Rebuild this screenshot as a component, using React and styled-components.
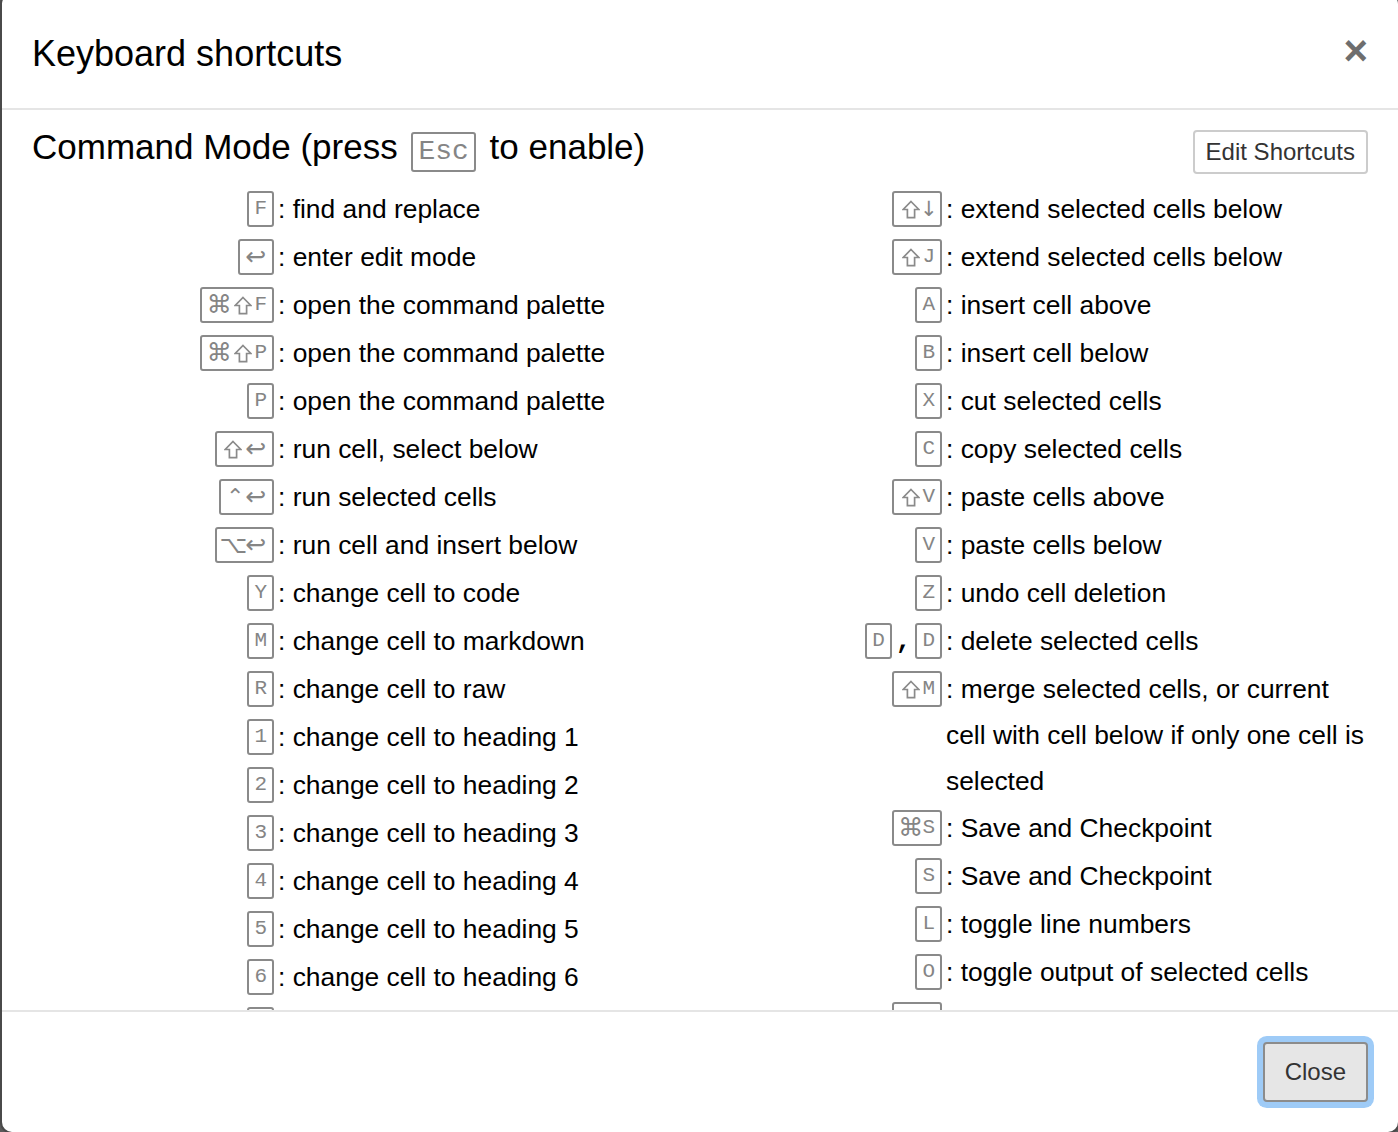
import React from 'react';
import styled, { createGlobalStyle } from 'styled-components';

const Global = createGlobalStyle`
  html, body { margin: 0; padding: 0; background: #5a5a5a; overflow: hidden; }
  body { font-family: "Liberation Sans", Arial, sans-serif; color: #000; }
  * { box-sizing: border-box; }
`;

const Page = styled.div`
  width: 1398px;
  height: 1132px;
  overflow: hidden;
`;

const Modal = styled.div`
  width: 1400px;
  margin-top: -8px;
  background: #fff;
  border: 2px solid #4a4a4a;
  border-radius: 12px;
  overflow: hidden;
`;

const Header = styled.div`
  display: flex;
  justify-content: space-between;
  align-items: flex-start;
  padding: 34px 30px 28px;
  border-bottom: 2px solid #e5e5e5;
`;

const Title = styled.h4`
  margin: 0;
  font-size: 36px;
  font-weight: normal;
  line-height: 52px;
`;

const CloseX = styled.button`
  background: none;
  border: 0;
  padding: 0;
  margin-top: 2px;
  font-family: "Liberation Sans", Arial, sans-serif;
  font-size: 42px;
  font-weight: bold;
  line-height: 42px;
  color: #6e6e6e;
  cursor: pointer;
`;

const Body = styled.div`
  height: 900px;
  padding: 15px 30px 0;
  overflow: hidden;
`;

const HeadRow = styled.div`
  display: flex;
  justify-content: space-between;
  align-items: flex-start;
  height: 60px;
`;

const Heading = styled.h4`
  margin: 0;
  font-size: 35px;
  font-weight: normal;
  line-height: 44px;
`;

const SmallButton = styled.button`
  margin-top: 5px;
  padding: 2px 11px;
  font-family: "Liberation Sans", Arial, sans-serif;
  font-size: 24px;
  line-height: 36px;
  color: #333;
  background: #fff;
  border: 2px solid #ccc;
  border-radius: 4px;
`;

const Columns = styled.div`
  display: grid;
  grid-template-columns: 668px 668px;
  align-items: start;
`;

const Column = styled.div`
  display: flex;
  flex-direction: column;
`;

const Row = styled.div`
  display: flex;
  align-items: flex-start;
`;

const KeyCell = styled.div`
  width: 246px;
  flex-shrink: 0;
  height: 48px;
  display: flex;
  align-items: center;
  justify-content: flex-end;
`;

const Descr = styled.div`
  flex: 1;
  font-size: 26.4px;
  line-height: 46px;
  padding-top: 1px;
`;

const Kbd = styled.kbd`
  display: inline-flex;
  align-items: center;
  height: ${(p) => (p.$big ? 40 : 36)}px;
  padding: 0 5px;
  margin: 0 4px;
  border: 2px solid #8a8a8a;
  border-radius: 3px;
  font-family: "Liberation Mono", "Courier New", monospace;
  font-size: ${(p) => (p.$big ? 28 : 21)}px;
  line-height: ${(p) => (p.$big ? 36 : 32)}px;
  color: #858585;
  vertical-align: ${(p) => (p.$big ? '0px' : 'middle')};
`;

const Sym = styled.span`
  display: inline-flex;
  align-items: center;
  justify-content: center;
  width: ${(p) => p.$w}px;
  height: 32px;
  font-family: "DejaVu Sans", sans-serif;
  font-size: ${(p) => p.$s}px;
  color: #858585;
`;

const Sep = styled.span`
  font-family: "Liberation Mono", monospace;
  font-size: 26px;
  font-weight: bold;
  color: #000;
`;

const Footer = styled.div`
  display: flex;
  justify-content: flex-end;
  padding: 30px;
  border-top: 2px solid #e5e5e5;
`;

const CloseButton = styled.button`
  padding: 10px 20px;
  font-family: "Liberation Sans", Arial, sans-serif;
  font-size: 24px;
  line-height: 36px;
  color: #333;
  background: #e6e6e6;
  border: 2px solid #8c8c8c;
  border-radius: 4px;
  box-shadow: 0 0 0 6px #9ecbf7;
`;

const ShiftIcon = () => (
  <svg width="18" height="19" viewBox="0 0 18 19" aria-hidden="true">
    <polygon
      points="9,1.5 16.8,9.5 12.6,9.5 12.6,17.6 5.4,17.6 5.4,9.5 1.2,9.5"
      fill="none"
      stroke="#8a8a8a"
      strokeWidth="1.7"
      strokeLinejoin="miter"
    />
  </svg>
);

const SYM = {
  '⇧': [23.5, 25],
  '⌘': [23.5, 25],
  '↩': [22, 25],
  '⌃': [19.5, 22],
  '⌥': [23.5, 24],
  '↓': [12.6, 21],
  '↑': [12.6, 21],
};

function Key({ text, big }) {
  const parts = [];
  let buf = '';
  for (const ch of text) {
    if (SYM[ch]) {
      if (buf) { parts.push(buf); buf = ''; }
      parts.push({ s: ch });
    } else buf += ch;
  }
  if (buf) parts.push(buf);
  return (
    <Kbd $big={big}>
      {parts.map((p, i) =>
        typeof p === 'string' ? (
          <span key={i}>{p}</span>
        ) : (
          <Sym key={i} $w={SYM[p.s][0]} $s={SYM[p.s][1]}>
            {p.s === '⇧' ? <ShiftIcon /> : p.s}
          </Sym>
        )
      )}
    </Kbd>
  );
}

function Shortcut({ keys, d }) {
  return (
    <Row>
      <KeyCell>
        {keys.map((k, i) =>
          k === ',' ? <Sep key={i}>,</Sep> : <Key key={i} text={k} />
        )}
      </KeyCell>
      <Descr>: {d}</Descr>
    </Row>
  );
}

const LEFT = [
  [['F'], 'find and replace'],
  [['↩'], 'enter edit mode'],
  [['⌘⇧F'], 'open the command palette'],
  [['⌘⇧P'], 'open the command palette'],
  [['P'], 'open the command palette'],
  [['⇧↩'], 'run cell, select below'],
  [['⌃↩'], 'run selected cells'],
  [['⌥↩'], 'run cell and insert below'],
  [['Y'], 'change cell to code'],
  [['M'], 'change cell to markdown'],
  [['R'], 'change cell to raw'],
  [['1'], 'change cell to heading 1'],
  [['2'], 'change cell to heading 2'],
  [['3'], 'change cell to heading 3'],
  [['4'], 'change cell to heading 4'],
  [['5'], 'change cell to heading 5'],
  [['6'], 'change cell to heading 6'],
  [['K'], 'select cell above'],
  [['↑'], 'select cell above'],
  [['↓'], 'select cell below'],
  [['J'], 'select cell below'],
  [['⇧K'], 'extend selected cells above'],
  [['⇧↑'], 'extend selected cells above'],
];

const RIGHT = [
  [['⇧↓'], 'extend selected cells below'],
  [['⇧J'], 'extend selected cells below'],
  [['A'], 'insert cell above'],
  [['B'], 'insert cell below'],
  [['X'], 'cut selected cells'],
  [['C'], 'copy selected cells'],
  [['⇧V'], 'paste cells above'],
  [['V'], 'paste cells below'],
  [['Z'], 'undo cell deletion'],
  [['D', ',', 'D'], 'delete selected cells'],
  [['⇧M'], 'merge selected cells, or current cell with cell below if only one cell is selected'],
  [['⌘S'], 'Save and Checkpoint'],
  [['S'], 'Save and Checkpoint'],
  [['L'], 'toggle line numbers'],
  [['O'], 'toggle output of selected cells'],
  [['⇧O'], 'toggle output scrolling of selected cells'],
  [['H'], 'show keyboard shortcuts'],
  [['I', ',', 'I'], 'interrupt the kernel'],
  [['0', ',', '0'], 'restart the kernel (with dialog)'],
];

export default function App() {
  return (
    <Page>
      <Global />
      <Modal>
        <Header>
          <Title>Keyboard shortcuts</Title>
          <CloseX aria-label="Close">×</CloseX>
        </Header>
        <Body>
          <HeadRow>
            <Heading>
              Command Mode (press <Key text="Esc" big /> to enable)
            </Heading>
            <SmallButton>Edit Shortcuts</SmallButton>
          </HeadRow>
          <Columns>
            <Column>
              {LEFT.map(([k, d], i) => <Shortcut key={i} keys={k} d={d} />)}
            </Column>
            <Column>
              {RIGHT.map(([k, d], i) => <Shortcut key={i} keys={k} d={d} />)}
            </Column>
          </Columns>
        </Body>
        <Footer>
          <CloseButton>Close</CloseButton>
        </Footer>
      </Modal>
    </Page>
  );
}
